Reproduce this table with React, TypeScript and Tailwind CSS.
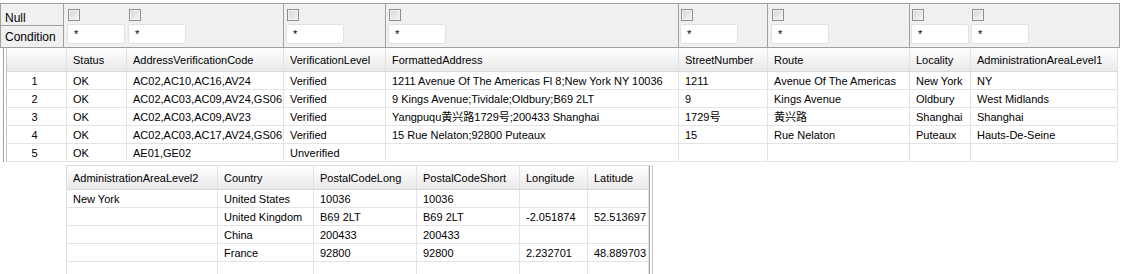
type Col = { name: string; w: string };

const topCols: Col[] = [
  { name: "", w: "w-[60px]" },
  { name: "Status", w: "w-[60px]" },
  { name: "AddressVerificationCode", w: "w-[157px]" },
  { name: "VerificationLevel", w: "w-[102px]" },
  { name: "FormattedAddress", w: "w-[293px]" },
  { name: "StreetNumber", w: "w-[89px]" },
  { name: "Route", w: "w-[142px]" },
  { name: "Locality", w: "w-[61px]" },
  { name: "AdministrationAreaLevel1", w: "w-[147px]" },
];

const topRows = [
  ["1", "OK", "AC02,AC10,AC16,AV24", "Verified", "1211 Avenue Of The Americas Fl 8;New York NY 10036", "1211", "Avenue Of The Americas", "New York", "NY"],
  ["2", "OK", "AC02,AC03,AC09,AV24,GS06", "Verified", "9 Kings Avenue;Tividale;Oldbury;B69 2LT", "9", "Kings Avenue", "Oldbury", "West Midlands"],
  ["3", "OK", "AC02,AC03,AC09,AV23", "Verified", "Yangpuqu黄兴路1729号;200433 Shanghai", "1729号", "黄兴路", "Shanghai", "Shanghai"],
  ["4", "OK", "AC02,AC03,AC17,AV24,GS06", "Verified", "15 Rue Nelaton;92800 Puteaux", "15", "Rue Nelaton", "Puteaux", "Hauts-De-Seine"],
  ["5", "OK", "AE01,GE02", "Unverified", "", "", "", "", ""],
];

const bottomCols: Col[] = [
  { name: "AdministrationAreaLevel2", w: "w-[151px]" },
  { name: "Country", w: "w-[96px]" },
  { name: "PostalCodeLong", w: "w-[103px]" },
  { name: "PostalCodeShort", w: "w-[103px]" },
  { name: "Longitude", w: "w-[68px]" },
  { name: "Latitude", w: "w-[61px]" },
];

const bottomRows = [
  ["New York", "United States", "10036", "10036", "", ""],
  ["", "United Kingdom", "B69 2LT", "B69 2LT", "-2.051874", "52.513697"],
  ["", "China", "200433", "200433", "", ""],
  ["", "France", "92800", "92800", "2.232701", "48.889703"],
  ["", "", "", "", "", ""],
];

// filter cells line up with the table columns below
const filters = [
  { w: "w-[63px]", pad: "pl-[3px]", sep: false },
  { w: "w-[156px]", pad: "pl-[1px]", sep: false },
  { w: "w-[102px]", pad: "pl-[2px]", sep: true },
  { w: "w-[293px]", pad: "pl-[2px]", sep: true },
  { w: "w-[89px]", pad: "pl-[1px]", sep: true },
  { w: "w-[142px]", pad: "pl-[3px]", sep: true },
  { w: "w-[61px]", pad: "pl-[1px]", sep: true },
  { w: "flex-1", pad: "pl-[1px]", sep: false },
];

function CheckBox() {
  return (
    <div className="ml-[1px] w-[12px] h-[12px] border border-[#8f8f8f] bg-linear-to-br from-[#d4d4d4] to-[#f6f6f6] shadow-[inset_0_0_0_1px_#f3f3f3]" />
  );
}

function FilterCell({ w, pad, sep }: { w: string; pad: string; sep: boolean }) {
  return (
    <div className={`${w} ${pad} ${sep ? "border-l border-[#a0a0a0]" : ""} shrink-0 flex flex-col pt-[5px]`}>
      <CheckBox />
      <div className="mt-[3px] w-[58px] h-[20px] bg-white border border-[#e1e2e6] rounded-[2px] pl-[6px] flex items-center text-[11px]">
        *
      </div>
    </div>
  );
}

function HeaderRow({ cols }: { cols: Col[] }) {
  return (
    <div className="flex h-[24px] border-b border-[#d8d8d8] bg-linear-to-b from-white to-[#e9e9e9]">
      {cols.map((c, i) => (
        <div
          key={i}
          className={`${c.w} shrink-0 border-r border-[#e2e2e2] pl-[6px] flex items-center whitespace-nowrap overflow-hidden`}
        >
          {c.name}
        </div>
      ))}
    </div>
  );
}

function BodyRow({ cols, cells, numbered }: { cols: Col[]; cells: string[]; numbered?: boolean }) {
  return (
    <div className="flex h-[18px] border-b border-[#e3e3e3]">
      {cells.map((v, i) => (
        <div
          key={i}
          className={`${cols[i].w} shrink-0 border-r border-[#e3e3e3] flex items-center whitespace-nowrap overflow-hidden ${
            numbered && i === 0 ? "justify-center pr-[4px]" : "pl-[6px]"
          }`}
        >
          {v}
        </div>
      ))}
    </div>
  );
}

export default function App() {
  return (
    <div className="w-[1121px] h-[274px] overflow-hidden bg-white text-black text-[11px] leading-[14px] font-['Liberation_Sans','Noto_Sans_CJK_SC',sans-serif]">
      {/* filter bar */}
      <div className="pt-[3px]">
        <div className="flex w-[1120px] h-[45px] border border-[#a0a0a0] bg-[#f0f0f0]">
          <div className="w-[63px] shrink-0 border-r border-[#a0a0a0] flex flex-col text-[12px]">
            <div className="h-[22px] border-b border-[#a0a0a0] pl-[4px] flex items-end">Null</div>
            <div className="flex-1 pl-[4px] flex items-center">Condition</div>
          </div>
          {filters.map((f, i) => (
            <FilterCell key={i} {...f} />
          ))}
        </div>
      </div>

      {/* main table */}
      <div className="ml-[3px] w-[1115px] border-l border-[#a0a0a0] pl-[2px]">
        <div className="border-l border-[#c4c4c4]">
          <HeaderRow cols={topCols} />
          {topRows.map((r, i) => (
            <BodyRow key={i} cols={topCols} cells={r} numbered />
          ))}
        </div>
      </div>

      {/* wrapped columns */}
      <div className="mt-[3px] ml-[66px] flex">
        <div className="border-l border-t border-[#dcdcdc] border-r-[#a0a0a0] border-r">
          <HeaderRow cols={bottomCols} />
          {bottomRows.map((r, i) => (
            <BodyRow key={i} cols={bottomCols} cells={r} />
          ))}
        </div>
        <div className="ml-[2px] border-l border-[#c4c4c4]" />
      </div>
    </div>
  );
}
